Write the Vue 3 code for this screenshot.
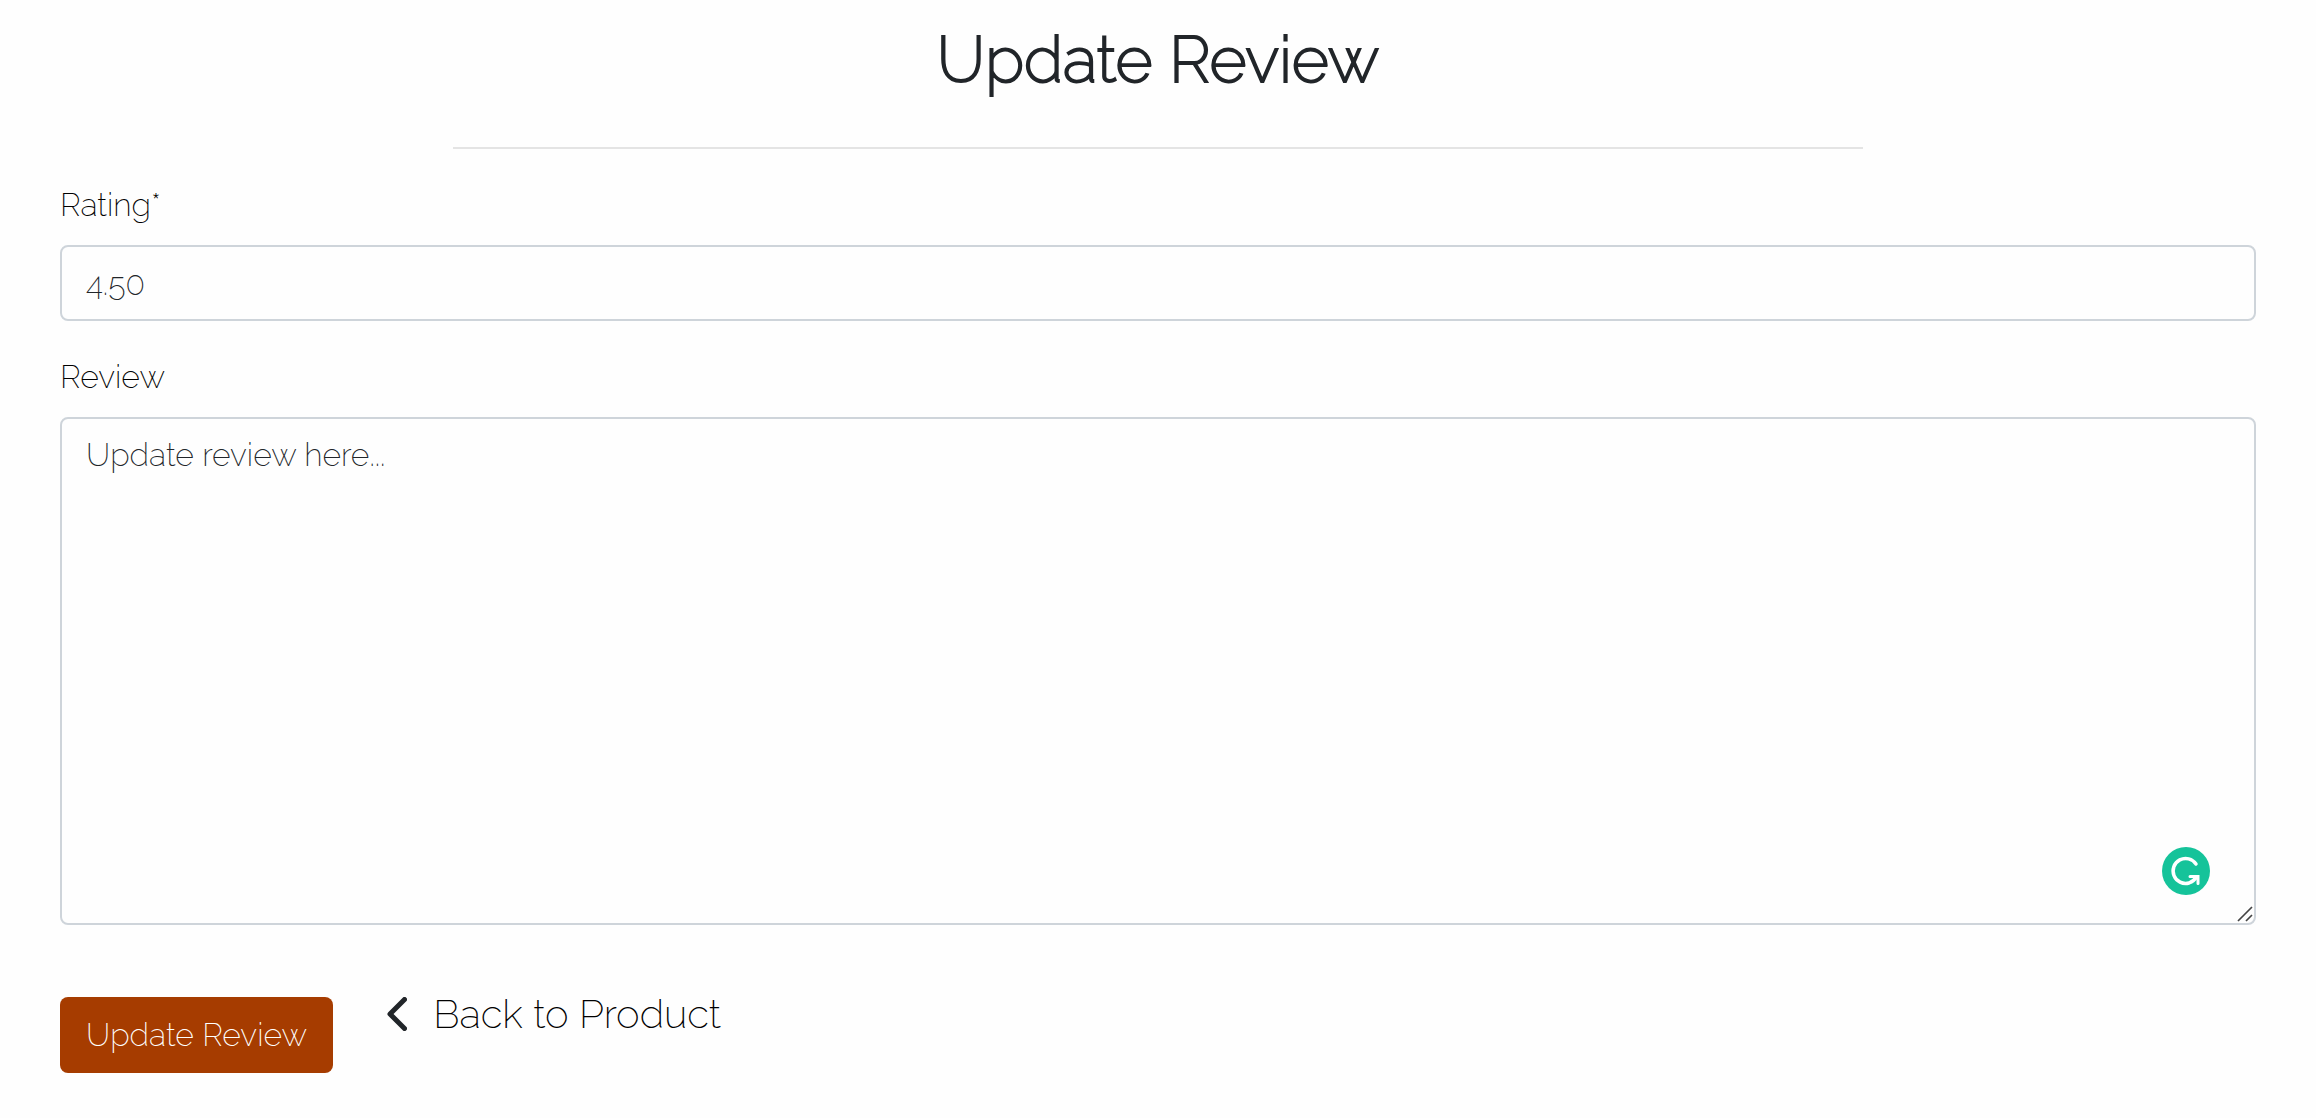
<script setup>
import { ref } from 'vue'

const rating = ref('4.50')
const review = ref('')
</script>

<template>
  <main class="page">
    <h1 class="title">Update Review</h1>
    <hr class="rule" />
    <form class="form" @submit.prevent>
      <div class="field">
        <label for="rating">Rating*</label>
        <input id="rating" v-model="rating" class="control" type="text" inputmode="decimal" required />
      </div>
      <div class="field">
        <label for="review">Review</label>
        <div class="editor">
          <textarea id="review" v-model="review" class="control area" placeholder="Update review here..."></textarea>
          <svg class="badge" viewBox="0 0 48 48" aria-hidden="true">
            <circle cx="24" cy="24" r="24" fill="#15c39a" />
            <path d="M34 17A12.500 12.500 0 1 0 27 36Q32 34 34.500 30" fill="none" stroke="#fff" stroke-width="3.500" stroke-linecap="round" />
            <path d="M28 29.500H36V36.500" fill="none" stroke="#fff" stroke-width="3" stroke-linecap="round" stroke-linejoin="miter" />
          </svg>
          <svg class="grip" viewBox="0 0 16 16" aria-hidden="true">
            <path d="M1 15L15 1M9 15L15 9" fill="none" stroke="#444" stroke-width="1.700" />
          </svg>
        </div>
      </div>
      <div class="actions">
        <button class="submit" type="submit">Update Review</button>
        <a class="back" href="#">
          <svg class="chevron" viewBox="0 0 20 34" aria-hidden="true">
            <path d="M17.500 2.500L3 17L17.500 31.500" fill="none" stroke="#212529" stroke-width="5" stroke-linecap="round" stroke-linejoin="round" />
          </svg>
          <span>Back to Product</span>
        </a>
      </div>
    </form>
  </main>
</template>

<style>
body {
  margin: 0;
  background: #fefefe;
}
</style>

<style scoped>
.page {
  box-sizing: border-box;
  padding: 20px 60px 44px;
  font-family: Raleway, Lato, sans-serif;
  font-size: 32px;
  font-weight: 200;
  line-height: 48px;
  color: #000;
}

.title {
  margin: 0;
  color: #212529;
  font-size: 64px;
  font-weight: 200;
  line-height: 80px;
  text-align: center;
  -webkit-text-stroke: 2px #212529;
}

.rule {
  width: calc(200% / 3 - 54px);
  height: 2px;
  margin: 47px auto 32px;
  border: 0;
  background: #e4e4e4;
}

.field {
  display: flex;
  flex-direction: column;
  gap: 16px;
  margin-bottom: 32px;
}

.control {
  box-sizing: border-box;
  display: block;
  width: 100%;
  height: 76px;
  margin: 0;
  padding: 12px 24px;
  border: 2px solid #ced4da;
  border-radius: 8px;
  outline: 0;
  background: #fefefe;
  color: #212529;
  font: inherit;
}

.area {
  height: 508px;
  resize: none;
}

.area::placeholder {
  color: #212529;
  opacity: 1;
}

.editor {
  position: relative;
}

.badge {
  position: absolute;
  right: 46px;
  bottom: 30px;
  width: 48px;
  height: 48px;
}

.grip {
  position: absolute;
  right: 3px;
  bottom: 3px;
  width: 16px;
  height: 16px;
}

.actions {
  display: flex;
  align-items: flex-start;
  gap: 54px;
  padding-top: 40px;
}

.submit {
  height: 76px;
  margin: 0;
  padding: 12px 26px;
  border: 0;
  border-radius: 8px;
  background: #a63c00;
  color: #fff;
  font: inherit;
  cursor: pointer;
}

.back {
  display: flex;
  align-items: center;
  gap: 26px;
  color: inherit;
  font-size: 40px;
  line-height: 34px;
  text-decoration: none;
}

.chevron {
  width: 20px;
  height: 34px;
}
</style>
